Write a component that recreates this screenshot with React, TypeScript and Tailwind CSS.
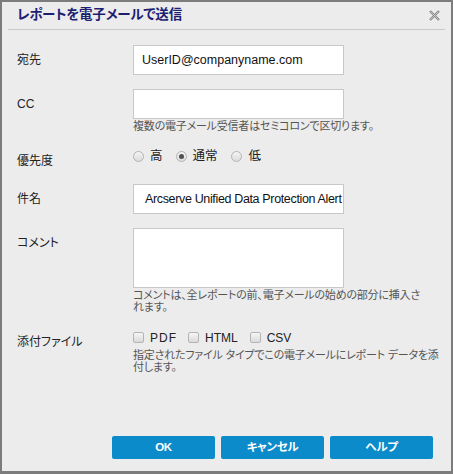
import React from "react";

const jp = "font-['Liberation_Sans','Noto_Sans_CJK_JP',sans-serif] [font-feature-settings:'palt']";

function Radio({ checked }: { checked?: boolean }) {
  return (
    <span className="w-[11px] h-[11px] rounded-full border border-[#b4b4b4] bg-gradient-to-b from-[#f4f4f4] to-[#dcdcdc] flex items-center justify-center">
      {checked && <span className="w-[5px] h-[5px] rounded-full bg-[#505050]" />}
    </span>
  );
}

function Check() {
  return (
    <span className="block w-[11px] h-[11px] rounded-[2px] border border-[#b4b4b4] bg-gradient-to-b from-[#f6f6f6] to-[#dadada]" />
  );
}

function Label({ children }: { children: React.ReactNode }) {
  return (
    <div className="h-[30px] flex items-center text-[12px] text-[#222]">{children}</div>
  );
}

function Hint({ lines }: { lines: string[] }) {
  return (
    <div className="text-[11px] leading-[12px] text-[#555] tracking-[-0.2px]">
      {lines.map((l, i) => (
        <div key={i} className="whitespace-nowrap">{l}</div>
      ))}
    </div>
  );
}

export default function App() {
  return (
    <div className={`w-[453px] h-[474px] bg-[#ececec] border-2 border-b-[3px] border-[#7c7c7c] flex flex-col ${jp}`}>
      <div className="mx-[6px] h-[28px] border-b border-[#c9c9c9] flex items-center justify-between pl-[9px] pr-[5px]">
        <span className="text-[13.5px] font-bold text-[#1e1e72] tracking-[-0.2px]">レポートを電子メールで送信</span>
        <svg width="11" height="11" viewBox="0 0 11 11" className="mb-[1px]">
          <path d="M1 1 L10 10 M10 1 L1 10" stroke="#8a8a8a" strokeWidth="2.4" />
          <path d="M1.5 1.5 L9.5 9.5 M9.5 1.5 L1.5 9.5" stroke="#d8d8d8" strokeWidth="0.7" />
        </svg>
      </div>

      <div className="pl-[15px] grid grid-cols-[116px_1fr]">
        {/* 宛先 */}
        <div className="mt-[15px]"><Label>宛先</Label></div>
        <div className="mt-[15px]">
          <div className="w-[211px] h-[30px] bg-white border border-[#c8c8c8] flex items-center pl-[8px] text-[12.5px] text-[#111] font-['Liberation_Sans',sans-serif]">
            UserID@companyname.com
          </div>
        </div>

        {/* CC */}
        <div className="mt-[14px]"><Label><span className="font-['Liberation_Sans',sans-serif]">CC</span></Label></div>
        <div className="mt-[14px]">
          <div className="w-[211px] h-[30px] bg-white border border-[#c8c8c8]" />
          <div className="mt-[1px]"><Hint lines={["複数の電子メール受信者はセミコロンで区切ります。"]} /></div>
        </div>

        {/* 優先度 */}
        <div className="mt-[14px]"><Label>優先度</Label></div>
        <div className="mt-[14px] pt-[3px]">
          <div className="flex items-center text-[12.5px] text-[#222] h-[14px]">
            <Radio />
            <span className="ml-[6px]">高</span>
            <span className="ml-[13px]"><Radio checked /></span>
            <span className="ml-[6px]">通常</span>
            <span className="ml-[13px]"><Radio /></span>
            <span className="ml-[7px]">低</span>
          </div>
        </div>

        {/* 件名 */}
        <div className="mt-[8px]"><Label>件名</Label></div>
        <div className="mt-[8px]">
          <div className="w-[211px] h-[30px] bg-white border border-[#c8c8c8] flex items-center pl-[11px] text-[12.5px] text-[#111] overflow-hidden whitespace-nowrap tracking-[-0.35px] font-['Liberation_Sans',sans-serif]">
            Arcserve Unified Data Protection Alert
          </div>
        </div>

        {/* コメント */}
        <div className="mt-[14px]"><Label>コメント</Label></div>
        <div className="mt-[14px]">
          <div className="w-[211px] h-[60px] bg-white border border-[#c8c8c8]" />
          <div className="mt-[1px]">
            <Hint lines={["コメントは、全レポートの前、電子メールの始めの部分に挿入さ", "れます。"]} />
          </div>
        </div>

        {/* 添付ファイル */}
        <div className="mt-[14px]"><Label>添付ファイル</Label></div>
        <div className="mt-[14px] pt-[5px]">
          <div className="flex items-center text-[12px] text-[#222] h-[11px] font-['Liberation_Sans',sans-serif]">
            <Check />
            <span className="ml-[6px] tracking-[1px]">PDF</span>
            <span className="ml-[11px]"><Check /></span>
            <span className="ml-[6px]">HTML</span>
            <span className="ml-[12px]"><Check /></span>
            <span className="ml-[6px]">CSV</span>
          </div>
          <div className="mt-[6px]">
            <Hint lines={["指定されたファイル タイプでこの電子メールにレポート データを添", "付します。"]} />
          </div>
        </div>
      </div>

      <div className="mt-auto flex justify-end gap-[6px] pr-[18px] pb-[12px]">
        {["OK", "キャンセル", "ヘルプ"].map((t) => (
          <button key={t} className="w-[103px] h-[23px] rounded-[2px] bg-[#0b8bca] text-white text-[11.5px] font-bold flex items-center justify-center tracking-[-0.3px]">
            {t}
          </button>
        ))}
      </div>
    </div>
  );
}
